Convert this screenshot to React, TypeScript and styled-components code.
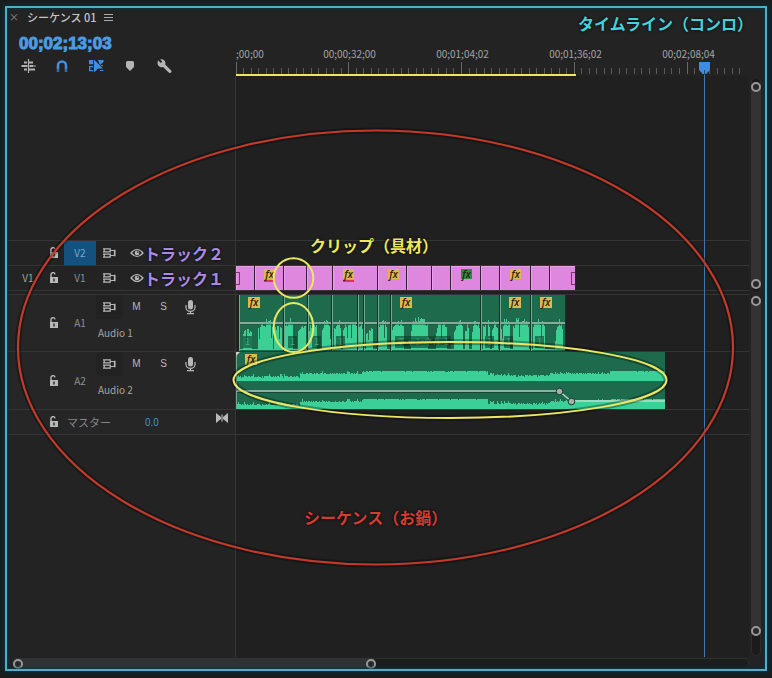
import React from "react";
import styled, { createGlobalStyle } from "styled-components";

const GlobalStyle = createGlobalStyle`
  * { box-sizing: border-box; }
  body {
    margin: 0;
    background: #1b1d1e;
    color: #a3a3a3;
    font: 10px/14px "Noto Sans CJK JP", "Noto Sans", sans-serif;
  }
  button {
    margin: 0;
    padding: 0;
    border: 0;
    background: none;
    color: inherit;
    font: inherit;
    cursor: pointer;
  }
  svg { display: block; flex: none; }
`;

const HEAD_WIDTH = "229px";

const Page = styled.div`
  display: flex;
  min-height: 100vh;
  padding: 6px 5px 7px;
`;

const Frame = styled.main`
  position: relative;
  flex: 1;
  display: flex;
  flex-direction: column;
  min-width: 0;
  overflow: hidden;
  background: #232323;
  border: 2px solid #4eaecb;
  box-shadow: 0 0 4px 2px #0c2c33;
`;

const FrameGlow = styled.div`
  position: absolute;
  inset: 0;
  box-shadow: inset 0 0 3px 1px #0c333c;
  pointer-events: none;
`;

const Header = styled.header`
  display: grid;
  grid-template-columns: ${HEAD_WIDTH} 1fr;
`;

const HeaderSide = styled.div`
  display: flex;
  flex-direction: column;
`;

const Tab = styled.div`
  display: flex;
  align-items: center;
  height: 18px;
  padding-left: 2px;
`;

const CloseButton = styled.button`
  width: 18px;
  text-align: left;
  line-height: 14px;
  color: #8c8c8c;
`;

const TabTitle = styled.h1`
  margin: 0 8px 0 0;
  font-size: 11px;
  line-height: 16px;
  font-weight: 500;
  color: #c4c4c4;
`;

const Timecode = styled.div`
  height: 33px;
  padding-left: 12px;
  font: 700 17px/35px "Liberation Sans", Arial, sans-serif;
  color: #4b9ce2;
  -webkit-text-stroke: 1px #4b9ce2;
`;

const Tools = styled.div`
  display: flex;
  padding-left: 4px;
`;

const ToolButton = styled.button<{ $active?: boolean }>`
  display: flex;
  align-items: center;
  justify-content: center;
  width: 34px;
  height: 14px;
  color: ${(p) => (p.$active ? "#3f8ee0" : "#b4b4b4")};
`;

const Note = styled.span<{ $color: string }>`
  font-size: 16px;
  line-height: 20px;
  font-weight: 700;
  white-space: nowrap;
  color: ${(p) => p.$color};
  text-shadow: 0 0 3px #000;
`;

const TitleBar = styled.div`
  display: flex;
  justify-content: flex-end;
  align-items: center;
  height: 30px;
  padding-right: 12px;
`;

const Ruler = styled.div`
  overflow: hidden;
  padding-top: 8px;
  margin-right: 16px;
`;

const RulerLabels = styled.div`
  display: flex;
`;

const RulerLabel = styled.span`
  flex: 0 0 113px;
  height: 16px;
  line-height: 16px;
  text-align: center;

  &:first-child {
    flex-basis: 57px;
    text-align: left;
  }
`;

const Pane = styled.section<{ $grow?: boolean }>`
  display: grid;
  grid-template-columns: 1fr 16px;
  flex: ${(p) => (p.$grow ? "1 0 auto" : "none")};
`;

const Tracks = styled.div`
  display: flex;
  flex-direction: column;
  min-width: 0;
`;

const Row = styled.div<{ $height?: number; $line?: boolean }>`
  display: grid;
  grid-template-columns: ${HEAD_WIDTH} 1fr;
  ${(p) => (p.$height ? `height: ${p.$height}px;` : "flex: 1;")}
  border-top: ${(p) => (p.$line ? "1px solid #353535" : "0")};
`;

const Head = styled.div<{ $raised?: boolean }>`
  display: grid;
  grid-template-columns: 42px 15px 32px 1fr;
  align-items: center;
  border-right: 1px solid #353535;
  background: ${(p) => (p.$raised ? "#262626" : "transparent")};
`;

const Lane = styled.div`
  display: flex;
  min-width: 0;
  overflow: hidden;
  background: #202020;
`;

const PatchButton = styled.button`
  height: 24px;
`;

const LockButton = styled.button`
  display: flex;
  color: #b8b8b8;
`;

const TargetButton = styled.button<{ $on?: boolean }>`
  height: 24px;
  text-align: center;
  color: ${(p) => (p.$on ? "#78aace" : "#8f8f8f")};
  background: ${(p) => (p.$on ? "#14517f" : "transparent")};
`;

const Controls = styled.div`
  display: flex;
  align-items: center;
`;

const AudioControls = styled.div`
  display: flex;
  flex-direction: column;
  align-self: stretch;
  gap: 7px;
`;

const ControlButton = styled.button<{ $shade?: boolean }>`
  display: flex;
  align-items: center;
  justify-content: center;
  width: 27px;
  height: 24px;
  font-family: "Liberation Sans", Arial, sans-serif;
  color: #b8b8b8;
  background: ${(p) => (p.$shade ? "#222222" : "transparent")};
`;

const EyeButton = styled(ControlButton)`
  width: 21px;
  padding-left: 6px;
`;

const TrackName = styled.span`
  padding-left: 2px;
`;

const MasterControls = styled.div`
  display: flex;
  grid-column: 3 / 5;
  align-self: stretch;
  align-items: center;
  justify-content: space-between;
  padding: 0 7px 0 3px;
`;

const MasterName = styled.span`
  width: 78px;
  font-size: 11px;
  color: #858585;
`;

const MasterLevel = styled.span`
  flex: 1;
  color: #3d8fd0;
`;

const KeyframeNav = styled.button`
  align-self: flex-start;
  padding-top: 3px;
  color: #b8b8b8;
`;

const Fx = styled.span<{ $tone?: "green"; $red?: boolean; $big?: boolean }>`
  flex: none;
  width: ${(p) => (p.$big ? 12 : 11)}px;
  height: ${(p) => (p.$red ? 13 : p.$big ? 11 : 10)}px;
  font: italic 600 10px/10px "Open Sans", sans-serif;
  text-align: center;
  color: #2a2410;
  background: ${(p) => (p.$tone === "green" ? "#318a3f" : "#dfb84f")};
  border-bottom: ${(p) => (p.$red ? "2px solid #dd3352" : "0")};
  box-shadow: ${(p) => (p.$red ? "inset 0 -1px 0 #df86df" : "none")};
`;

const VideoClip = styled.div<{ $width: number; $fx?: number }>`
  display: flex;
  align-items: flex-start;
  flex: 0 0 ${(p) => p.$width}px;
  height: 24px;
  padding: 3px 0 0 ${(p) => p.$fx ?? 0}px;
  background: #df86df;
  border-right: 1px solid #342034;
  box-shadow: inset 1px 1px 0 #ea9fea;
`;

const TrimMark = styled.span<{ $end?: boolean }>`
  width: 4px;
  height: 13px;
  margin-top: 3px;
  margin-left: ${(p) => (p.$end ? "auto" : "0")};
  border: 1px solid #6b4556;
  border-${(p) => (p.$end ? "right" : "left")}: 0;
`;

const AudioClip = styled.div<{ $width: number; $first?: boolean }>`
  position: relative;
  flex: 0 0 ${(p) => p.$width}px;
  margin-left: ${(p) => (p.$first ? 3 : 0)}px;
  height: 56px;
  overflow: hidden;
  background: #1e6a4c;
`;

const AudioFx = styled.div<{ $left: number }>`
  position: absolute;
  top: 2px;
  left: ${(p) => p.$left}px;
`;

const ChannelTag = styled.span`
  position: absolute;
  left: 4px;
  bottom: 3px;
  padding: 0 2px;
  font-size: 9px;
  line-height: 12px;
  white-space: nowrap;
  color: #4fa783;
  background: rgba(10, 62, 42, 0.6);
`;

const MusicClip = styled.div`
  position: relative;
  flex: 0 0 429px;
  height: 57px;
  background: #1e6a4c;
`;

const VBar = styled.div<{ $top: number; $bottom: number }>`
  display: flex;
  width: 10px;
  margin: 1px 0 1px 2px;
  padding: ${(p) => p.$top}px 0 ${(p) => p.$bottom}px;
  border-radius: 5px;
  background: #1b1b1b;
  box-shadow: inset 0 0 0 1px #2d2d2d;
`;

const VThumb = styled.div`
  flex: 1;
  display: flex;
  flex-direction: column;
  justify-content: space-between;
  border-radius: 5px;
  background: #333333;
`;

const HBar = styled.div`
  display: flex;
  height: 11px;
  margin: 1px 16px 0 6px;
  border-radius: 5px;
  background: #1b1e1d;
  box-shadow: inset 0 0 0 1px #2d2f2f;
`;

const HThumb = styled.div`
  display: flex;
  justify-content: space-between;
  align-items: flex-end;
  flex: 36;
  border-radius: 5px;
  background: #303333;
`;

const HRest = styled.div`
  flex: 37;
`;

const Handle = styled.span`
  width: 10px;
  height: 10px;
  border: 2px solid #999999;
  border-radius: 50%;
  background: #292929;
`;

const Playhead = styled.div`
  position: absolute;
  left: 691px;
  top: 54px;
  bottom: 12px;
  display: flex;
  flex-direction: column;
  align-items: center;
  width: 13px;
`;

const PlayLine = styled.div`
  flex: 1;
  width: 1px;
  background: #4079ad;
`;

const Rings = styled.svg`
  position: absolute;
  left: 0;
  top: 0;
  pointer-events: none;
`;

const FloatingNote = styled.div<{ $left: number; $top: number }>`
  position: absolute;
  left: ${(p) => p.$left}px;
  top: ${(p) => p.$top}px;
`;

const noise = (n: number) => {
  const v = Math.sin(n * 127.1) * 43758.5453;
  return v - Math.floor(v);
};

const Lock = () => (
  <svg width="10" height="12" viewBox="0 0 10 12">
    <path d="M2 5V3a2 2 0 0 1 4-.6" fill="none" stroke="currentColor" strokeWidth="1.4" />
    <rect x="1" y="5" width="8" height="6" fill="currentColor" />
    <path d="M5 6.5v3" stroke="#262626" strokeWidth="1.4" />
  </svg>
);

const SyncIcon = () => (
  <svg width="13" height="10" viewBox="0 0 13 10" fill="none" stroke="currentColor" strokeWidth="1.2">
    <path d="M0 .9H7.2V3.9H0M1.2 3.9V.9M0 6.1H7.2V9.1H0M1.2 9.1V6.1" />
    <path d="M7.2 2.5H11.5V7.5H7.2" />
    <path d="M11.8 1.8v6.4" strokeWidth="1.4" />
  </svg>
);

const EyeIcon = () => (
  <svg width="14" height="10" viewBox="0 0 14 10">
    <path d="M1 5Q7-2 13 5Q7 12 1 5Z" fill="none" stroke="currentColor" strokeWidth="1.2" />
    <circle cx="7" cy="5" r="2.3" fill="currentColor" />
    <circle cx="7.7" cy="4.3" r=".8" fill="#232323" />
  </svg>
);

const MicIcon = () => (
  <svg width="11" height="15" viewBox="0 0 11 15">
    <rect x="3" y="0" width="5" height="9.5" rx="2.5" fill="currentColor" />
    <path d="M1 5v2.5a4.5 3.8 0 0 0 9 0V5M5.5 11v3M2 13.7h7" fill="none" stroke="currentColor" strokeWidth="1.2" />
  </svg>
);

const NestIcon = () => (
  <svg width="15" height="14" viewBox="0 0 15 14" fill="none" stroke="currentColor">
    <path d="M7.5 0v14" strokeWidth="1.2" />
    <path d="M3 3.5h3M8 3.5h4M1 7h5M9 7h3M3 10.5h3M8 10.5h6" strokeWidth="2" />
    <path d="M0 7h15" strokeWidth="1" />
  </svg>
);

const MagnetIcon = () => (
  <svg width="12" height="12" viewBox="0 0 12 12" fill="none">
    <path d="M2 9V5.5a4 4 0 0 1 8 0V9" stroke="currentColor" strokeWidth="2.6" />
    <path d="M2 9v3M10 9v3" stroke="#356a9e" strokeWidth="2.6" />
  </svg>
);

const LinkedIcon = () => (
  <svg width="15" height="14" viewBox="0 0 15 14" fill="currentColor">
    <path d="M0 1h4.2v4.2H0zM9 1h5.5v2L11 6z" />
    <path d="M5 .5 14 9.5H9L5 13.5z" />
    <path d="M4.2 7.6H.7v4h3.5" fill="none" stroke="currentColor" strokeWidth="1.3" />
    <path d="M11 11.5h3.5M12 6.5h2" stroke="currentColor" />
  </svg>
);

const MarkerIcon = () => (
  <svg width="8" height="10" viewBox="0 0 8 10">
    <path d="M1.5 0h5Q8 0 8 1.5V6L4 10 0 6V1.5Q0 0 1.5 0Z" fill="currentColor" />
  </svg>
);

const WrenchIcon = () => (
  <svg width="15" height="15" viewBox="0 0 15 15">
    <path
      d="M1 1.2 3.8 4 5.2 2.6 3.2.4a4 4 0 0 1 5 5.2l6 6q.7 1-.2 1.9t-2 .2L6 7.9A4 4 0 0 1 .6 3.5Z"
      fill="currentColor"
    />
  </svg>
);

const BowtieIcon = () => (
  <svg width="12" height="10" viewBox="0 0 12 10" fill="currentColor">
    <path d="M0 0 5 4V1.5H5.6V8.5H5V6L0 10ZM12 0 7 4V1.5H6.4V8.5H7V6l5 4Z" />
  </svg>
);

const MenuIcon = () => (
  <svg width="9" height="9" viewBox="0 0 9 9" stroke="#aaaaaa">
    <path d="M0 1.5h9M0 4.5h9M0 7.5h9" />
  </svg>
);

const rulerLabels = [";00;00", "00;00;32;00", "00;01;04;02", "00;01;36;02", "00;02;08;04"];

const RulerTicks = () => (
  <svg width="513" height="14" shapeRendering="crispEdges">
    {Array.from({ length: 68 }, (_, i) => {
      const major = i % 15 === 0;
      const x = Math.floor((i * 451) / 60);
      return <rect key={i} x={x} y={major ? 0 : 6} width="1" height={major ? 12 : 6} fill={major ? "#686868" : "#5a5a5a"} />;
    })}
    <rect y="12" width="340" height="2" fill="#f0e265" />
  </svg>
);

type Video = { w: number; fx?: number; red?: boolean; green?: boolean; start?: boolean; end?: boolean };
const videoClips: Video[] = [
  { w: 19, start: true },
  { w: 29, fx: 9, red: true },
  { w: 23 },
  { w: 26 },
  { w: 45, fx: 10, red: true },
  { w: 29, fx: 10 },
  { w: 25 },
  { w: 19 },
  { w: 30, fx: 10, green: true },
  { w: 19 },
  { w: 31, fx: 10 },
  { w: 19 },
  { w: 26, end: true },
];

type Audio = { x: number; w: number; fx?: number; tag?: string };
const audioClips: Audio[] = [
  { x: 239, w: 45, fx: 9, tag: "1" },
  { x: 284, w: 24, tag: "1" },
  { x: 308, w: 24, tag: "1" },
  { x: 332, w: 26, tag: "1" },
  { x: 358, w: 6 },
  { x: 364, w: 14 },
  { x: 378, w: 13 },
  { x: 391, w: 90, fx: 9, tag: "チャンネル 1" },
  { x: 481, w: 19, tag: "1" },
  { x: 500, w: 31, fx: 9, tag: "1" },
  { x: 531, w: 35, fx: 9, tag: "1" },
];

/* Spoken passages on the first audio track: start, end, peak height. */
const speech = [
  [243, 252, 23], [258, 273, 31], [274, 282, 28], [285, 293, 33], [298, 306, 29],
  [309, 317, 30], [322, 331, 33], [334, 341, 32], [343, 357, 30], [359, 363, 33],
  [366, 373, 25], [378, 387, 31], [392, 404, 32], [411, 428, 33], [436, 447, 30],
  [454, 463, 31], [465, 469, 29], [472, 480, 32], [483, 490, 34], [492, 498, 32],
  [501, 510, 32], [513, 529, 33], [533, 545, 33], [555, 563, 31],
];

const SpeechWave = ({ x, w }: { x: number; w: number }) => {
  let d = "";
  speech.forEach(([a, b, h]) => {
    for (let i = a; i < b; i++) {
      if (i < x || i >= x + w) continue;
      const edge = Math.min(1, 0.75 + Math.min(i - a, b - i) * 0.1);
      const bar = Math.max(4, Math.round(h * edge * (noise(i) < 0.07 ? 0.4 : 0.74 + noise(i * 3) * 0.26)));
      d += `M${i} ${55 - bar}h1v${bar}h-1z`;
    }
  });
  return (
    <svg width={w} height="56" viewBox={`${x} 0 ${w} 56`} shapeRendering="crispEdges">
      <path d={d} fill="#3bcf94" />
      <rect x={x} y="54" width={w} height="1" fill="#3bcf94" />
      <rect x={x} y="27" width={w} height="2" fill="#8aa99b" />
      <rect x={x} y="29" width={w} height="1" fill="#174f3a" fillOpacity=".5" />
      <rect x={x} y="0" width="1" height="56" fill="#6fa98f" />
      <rect x={x + w - 1} y="0" width="1" height="56" fill="#12382a" />
    </svg>
  );
};

const levelAt = (x: number) => {
  if (x < 64) return 5;
  if (x < 127) return 8;
  if (x < 252) return 10;
  if (x < 314) return 6;
  if (x < 376) return 8;
  return 10;
};

const MusicWave = () => {
  const band = (base: number) => {
    let d = "";
    for (let i = 1; i < 429; i++) {
      const level = levelAt(i);
      const calm = level === 10;
      const h =
        level +
        (noise(i + base) < (calm ? 0.1 : 0.45) ? -1 : 0) +
        (noise(i * 5) < (calm ? 0 : 0.12) ? 2 : 0) -
        (level < 7 && noise(i * 2) < 0.2 ? 1 : 0);
      d += `M${i} ${base - h}h1v${h}h-1z`;
    }
    return d;
  };
  return (
    <svg width="429" height="57" viewBox="0 0 429 57">
      <g shapeRendering="crispEdges">
        <path d={band(29) + band(57)} fill="#3bd097" />
        <rect width="1" height="57" fill="#6fa98f" />
        <rect x="1" y="38" width="322" height="2" fill="#8fb0a2" />
        <rect x="1" y="40" width="322" height="1" fill="#174534" />
        <rect x="336" y="48" width="93" height="2" fill="#a0d8bf" />
      </g>
      <path d="M0 0h4L0 4Z" fill="#d0d0d0" />
      <path d="M323 39l12 10" stroke="#bcd4c9" strokeWidth="1.5" />
      <g fill="#a4b0aa" stroke="#173c2d">
        <circle cx="323.5" cy="39.5" r="3.3" />
        <circle cx="335.5" cy="49.5" r="3.3" />
      </g>
    </svg>
  );
};

const VideoHead = ({ name, source, on, note }: { name: string; source?: string; on?: boolean; note: string }) => (
  <Head>
    {source ? <PatchButton>{source}</PatchButton> : <span />}
    <LockButton aria-label={`Lock ${name}`}><Lock /></LockButton>
    <TargetButton $on={on}>{name}</TargetButton>
    <Controls>
      <ControlButton aria-label="Sync lock"><SyncIcon /></ControlButton>
      <EyeButton aria-label="Toggle track output"><EyeIcon /></EyeButton>
      <Note $color="#a98ae6">{note}</Note>
    </Controls>
  </Head>
);

const AudioHead = ({ name, title }: { name: string; title: string }) => (
  <Head $raised>
    <span />
    <LockButton aria-label={`Lock ${name}`}><Lock /></LockButton>
    <TargetButton>{name}</TargetButton>
    <AudioControls>
      <Controls>
        <ControlButton $shade aria-label="Sync lock"><SyncIcon /></ControlButton>
        <ControlButton>M</ControlButton>
        <ControlButton>S</ControlButton>
        <ControlButton aria-label="Record voice-over"><MicIcon /></ControlButton>
      </Controls>
      <TrackName>{title}</TrackName>
    </AudioControls>
  </Head>
);

export default function App() {
  return (
    <Page>
      <GlobalStyle />
      <Frame>
        <Header>
          <HeaderSide>
            <Tab>
              <CloseButton aria-label="Close">×</CloseButton>
              <TabTitle>シーケンス 01</TabTitle>
              <button aria-label="Panel menu"><MenuIcon /></button>
            </Tab>
            <Timecode>00;02;13;03</Timecode>
            <Tools>
              <ToolButton aria-label="Nest sequences"><NestIcon /></ToolButton>
              <ToolButton $active aria-label="Snap"><MagnetIcon /></ToolButton>
              <ToolButton $active aria-label="Linked selection"><LinkedIcon /></ToolButton>
              <ToolButton aria-label="Add marker"><MarkerIcon /></ToolButton>
              <ToolButton aria-label="Timeline settings"><WrenchIcon /></ToolButton>
            </Tools>
          </HeaderSide>
          <HeaderSide>
            <TitleBar>
              <Note $color="#43d3dc">タイムライン（コンロ）</Note>
            </TitleBar>
            <Ruler>
              <RulerLabels>
                {rulerLabels.map((t) => <RulerLabel key={t}>{t}</RulerLabel>)}
              </RulerLabels>
              <RulerTicks />
            </Ruler>
          </HeaderSide>
        </Header>

        <Pane>
          <Tracks>
            <Row $height={164}><Head /><Lane /></Row>
            <Row $height={25} $line>
              <VideoHead name="V2" on note="トラック２" />
              <Lane />
            </Row>
            <Row $height={25} $line>
              <VideoHead name="V1" source="V1" note="トラック１" />
              <Lane>
                {videoClips.map((c, i) => (
                  <VideoClip key={i} $width={c.w} $fx={c.fx}>
                    {c.start && <TrimMark />}
                    {c.fx && <Fx $red={c.red} $tone={c.green ? "green" : undefined}>fx</Fx>}
                    {c.end && <TrimMark $end />}
                  </VideoClip>
                ))}
              </Lane>
            </Row>
            <Row $height={4} $line><Head /><Lane /></Row>
          </Tracks>
          <VBar $top={5} $bottom={4}>
            <VThumb><Handle /><Handle /></VThumb>
          </VBar>
        </Pane>

        <Pane $grow>
          <Tracks>
            <Row $height={57} $line>
              <AudioHead name="A1" title="Audio 1" />
              <Lane>
                {audioClips.map((c, i) => (
                  <AudioClip key={c.x} $width={c.w} $first={i === 0}>
                    <SpeechWave x={c.x} w={c.w} />
                    {c.fx && <AudioFx $left={c.fx}><Fx as="div" $big>fx</Fx></AudioFx>}
                    {c.tag && <ChannelTag>{c.tag}</ChannelTag>}
                  </AudioClip>
                ))}
              </Lane>
            </Row>
            <Row $height={58} $line>
              <AudioHead name="A2" title="Audio 2" />
              <Lane>
                <MusicClip>
                  <MusicWave />
                  <AudioFx $left={9}><Fx as="div" $big>fx</Fx></AudioFx>
                </MusicClip>
              </Lane>
            </Row>
            <Row $height={25} $line>
              <Head $raised>
                <span />
                <LockButton aria-label="Lock master"><Lock /></LockButton>
                <MasterControls>
                  <MasterName>マスター</MasterName>
                  <MasterLevel>0.0</MasterLevel>
                  <KeyframeNav aria-label="Fold track"><BowtieIcon /></KeyframeNav>
                </MasterControls>
              </Head>
              <Lane />
            </Row>
            <Row $line><Head /><Lane /></Row>
          </Tracks>
          <VBar $top={1} $bottom={20}>
            <VThumb><Handle /><Handle /></VThumb>
          </VBar>
        </Pane>

        <HBar>
          <HThumb><Handle /><Handle /></HThumb>
          <HRest />
        </HBar>

        <Playhead>
          <svg width="11" height="13" viewBox="0 0 11 13">
            <path d="M0 0h11v8l-4 4H4L0 8Z" fill="#3d8ee2" />
            <path d="M5.5 8v5" stroke="#1c4570" />
          </svg>
          <PlayLine />
        </Playhead>

        <Rings width="760" height="663" viewBox="7 8 760 663" fill="none">
          <g stroke="#000000" strokeOpacity=".3" strokeWidth="6">
            <ellipse cx="375.5" cy="347.5" rx="357.5" ry="217" />
            <ellipse cx="450" cy="380" rx="216.5" ry="38" />
          </g>
          <ellipse cx="375.5" cy="347.5" rx="357.5" ry="217" stroke="#c23a2a" strokeWidth="2.2" />
          <g stroke="#ece664" strokeWidth="2">
            <circle cx="293.5" cy="278" r="19.8" />
            <ellipse cx="293.5" cy="327.5" rx="19.8" ry="24.5" />
            <ellipse cx="450" cy="380" rx="216.5" ry="38" />
          </g>
        </Rings>

        <FloatingNote $left={303} $top={227}><Note $color="#efe85a">クリップ（具材）</Note></FloatingNote>
        <FloatingNote $left={297} $top={499}><Note $color="#d33c31">シーケンス（お鍋）</Note></FloatingNote>
        <FrameGlow />
      </Frame>
    </Page>
  );
}
